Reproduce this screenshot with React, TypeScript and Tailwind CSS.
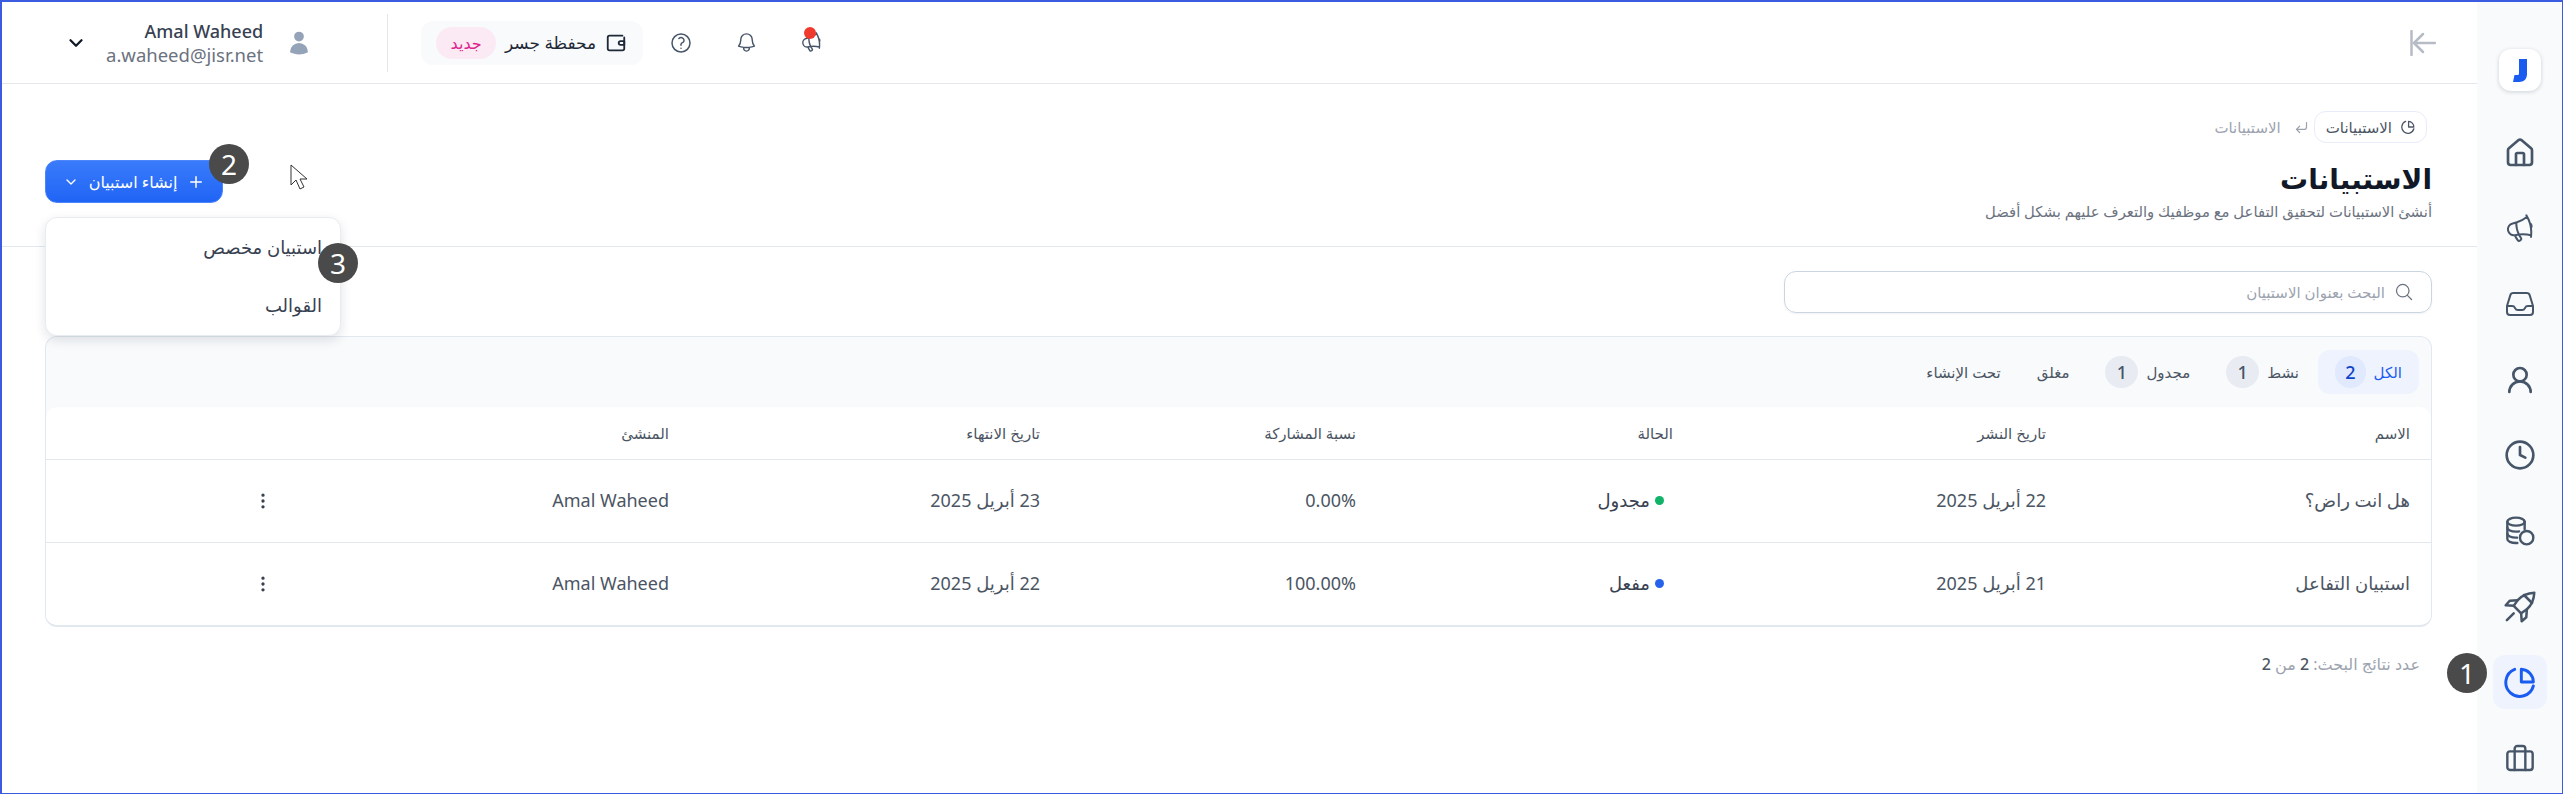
import { ChevronDown, Clock, CornerDownLeft, EllipsisVertical, House, Plus, UserRound } from 'lucide-react'
import {
  HiOutlineBell,
  HiOutlineInbox,
  HiOutlineMagnifyingGlass,
  HiOutlineMegaphone,
  HiOutlineQuestionMarkCircle,
  HiUser,
} from 'react-icons/hi2'

const FONT = "font-['Noto_Sans','DejaVu_Sans',sans-serif]"

function PieIcon({ className }: { className?: string }) {
  return (
    <svg viewBox="0 0 24 24" fill="none" stroke="currentColor" strokeWidth="2.200" strokeLinecap="round" strokeLinejoin="round" className={className}>
      <path d="M8 2.500a10.500 10.500 0 1 0 14 12.500" />
      <path d="M13 2.500a9.500 9.500 0 0 1 9 9.500h-9z" />
    </svg>
  )
}

function MegaIcon({ className }: { className?: string }) {
  return <HiOutlineMegaphone className={`-rotate-12 ${className}`} />
}

function RocketIcon({ className }: { className?: string }) {
  return (
    <svg viewBox="0 0 28 28" fill="none" stroke="currentColor" strokeWidth="2.200" strokeLinecap="round" strokeLinejoin="round" className={className}>
      <path d="M26.500 1.500c-6 .3-11 2.500-14.500 6.500L8.500 13l6.500 6.500 5-3.500c4-3.500 6.200-8.500 6.500-14.500z" />
      <path d="M12 8l-7 .5-3.500 4 7 .5" />
      <path d="M20 16l-.5 7-4 3.500-.5-7" />
      <path d="M2.500 25.500l6-6" />
      <path d="M17.500 3.500l7 7" />
    </svg>
  )
}

function DbCoinIcon({ className }: { className?: string }) {
  return (
    <svg viewBox="0 0 24 24" fill="none" stroke="currentColor" strokeWidth="1.800" strokeLinecap="round" strokeLinejoin="round" className={className}>
      <ellipse cx="9" cy="5" rx="6.500" ry="3" />
      <path d="M2.500 5v13c0 1.700 2.800 3 6.500 3h1" />
      <path d="M15.500 5v5.500" />
      <path d="M2.500 9.500c0 1.600 2.800 3 6.500 3 .8 0 1.600 0 2.300-.2" />
      <path d="M2.500 14c0 1.600 2.800 3 6.500 3h.8" />
      <circle cx="17" cy="17" r="5" />
    </svg>
  )
}

function CaseIcon({ className }: { className?: string }) {
  return (
    <svg viewBox="0 0 24 24" fill="none" stroke="currentColor" strokeWidth="1.800" strokeLinecap="round" strokeLinejoin="round" className={className}>
      <rect x="2.500" y="7" width="19" height="14" rx="2" />
      <path d="M8 21V5a2 2 0 0 1 2-2h4a2 2 0 0 1 2 2v16" />
    </svg>
  )
}

function WalletIcon({ className }: { className?: string }) {
  return (
    <svg viewBox="0 0 24 24" fill="none" stroke="currentColor" strokeWidth="2" strokeLinecap="round" strokeLinejoin="round" className={className}>
      <path d="M19 4H5a2 2 0 0 0-2 2v12a2 2 0 0 0 2 2h14a2 2 0 0 0 2-2V6" />
      <path d="M21 10h-4a2 2 0 0 0 0 4h4z" />
    </svg>
  )
}

function CollapseIcon({ className }: { className?: string }) {
  return (
    <svg viewBox="0 0 26 26" fill="none" stroke="currentColor" strokeWidth="2.500" strokeLinecap="round" strokeLinejoin="round" className={className}>
      <path d="M1.500 1v24" />
      <path d="M13 4l-9 9 9 9" />
      <path d="M4 13h21" />
    </svg>
  )
}

function Marker({ n, className }: { n: number; className: string }) {
  return (
    <span className={`absolute z-20 flex h-10 w-10 items-center justify-center rounded-full bg-[#4a4a4a] text-[28px] leading-none text-white ${className}`}>
      {n}
    </span>
  )
}

const NAV = [
  { Icon: House, key: 'home' },
  { Icon: MegaIcon, key: 'announce' },
  { Icon: HiOutlineInbox, key: 'inbox' },
  { Icon: UserRound, key: 'user' },
  { Icon: Clock, key: 'clock' },
  { Icon: DbCoinIcon, key: 'payroll' },
  { Icon: RocketIcon, key: 'rocket' },
  { Icon: PieIcon, key: 'surveys', active: true },
  { Icon: CaseIcon, key: 'jobs' },
]

const TABS = [
  { label: 'الكل', count: 2, active: true },
  { label: 'نشط', count: 1 },
  { label: 'مجدول', count: 1 },
  { label: 'مغلق' },
  { label: 'تحت الإنشاء' },
]

const ROWS = [
  { name: 'هل انت راض؟', publish: '22 أبريل 2025', status: 'مجدول', dot: 'bg-[#10b368]', rate: '0.00%', end: '23 أبريل 2025' },
  { name: 'استبيان التفاعل', publish: '21 أبريل 2025', status: 'مفعل', dot: 'bg-[#2563eb]', rate: '100.00%', end: '22 أبريل 2025' },
]

const COLS = 'grid grid-cols-[364px_373px_317px_316px_371px_396px_1fr] items-center pr-[21px]'

export default function App() {
  return (
    <div dir="rtl" className={`${FONT} relative flex h-[794px] border-t-2 border-r border-b border-l-2 border-[#3b5be0] bg-white text-[#374151]`}>
      {/* Sidebar */}
      <aside className="flex w-[85px] shrink-0 flex-col items-center bg-[#f8fafc] pt-[47px]">
        <div className="flex h-[42px] w-[42px] items-center justify-center rounded-xl bg-white shadow-[0_1px_4px_rgba(15,23,42,0.18)]">
          <svg viewBox="0 0 14 23" className="h-[23px] w-[14px]" fill="#1a5cf0">
            <path d="M6 0h8v15c0 5-3 8-8 8H0l1.500-7h3c1 0 1.500-.6 1.500-1.500z" />
          </svg>
        </div>
        <nav className="mt-[35px] flex flex-col items-center gap-[21.600px]">
          {NAV.map(({ Icon, key, active }) => (
            <div key={key} className={`flex h-[54px] w-[54px] items-center justify-center rounded-xl ${active ? 'bg-[#eef3fe] text-[#1a5cf0]' : 'text-[#475569]'}`}>
              <Icon className="h-[32px] w-[32px]" />
            </div>
          ))}
        </nav>
      </aside>

      <main className="relative flex min-w-0 flex-1 flex-col">
        {/* Top bar */}
        <header className="flex h-[82px] shrink-0 items-center justify-between border-b border-[#e5e7eb] pr-[41px] pl-[63px]">
          <CollapseIcon className="h-[26px] w-[26px] text-[#b6bcc6]" />
          <div className="flex items-center">
            <div className="relative flex h-6 w-6 items-center justify-center text-[#475569]">
              <MegaIcon className="h-[23px] w-[23px]" />
              <span className="absolute top-[-4px] right-[7px] h-3 w-3 rounded-full bg-[#ef3b2d]" />
            </div>
            <HiOutlineBell className="mr-[41px] h-[23px] w-[23px] text-[#475569]" />
            <HiOutlineQuestionMarkCircle className="mr-[42px] h-[24px] w-[24px] text-[#475569]" />
            <div className="mr-[26px] flex h-11 w-[222px] items-center rounded-xl bg-[#f8fafc] pr-[16px]">
              <WalletIcon className="h-[22px] w-[22px] text-[#1f2937]" />
              <span className="mr-[9px] text-[17px] text-[#1f2937]">محفظة جسر</span>
              <span className="mr-auto ml-[15px] flex h-8 w-[60px] items-center justify-center rounded-2xl bg-[#fbeaf4] text-[16px] text-[#db2590]">جديد</span>
            </div>
            <div className="mr-[33px] h-[58px] w-px bg-[#e5e7eb]" />
            <HiUser className="mr-[75px] ml-[23px] h-[26px] w-[26px] text-[#94a3b8]" />
            <div className="text-right" dir="ltr">
              <div className="text-[18px] leading-[23px] font-medium text-[#374151]">Amal Waheed</div>
              <div className="text-[18.500px] leading-[23px] text-[#6b7280]">a.waheed@jisr.net</div>
            </div>
            <ChevronDown className="mr-[19px] h-[22px] w-[22px] text-[#111827]" strokeWidth={2.500} />
          </div>
        </header>

        {/* Page heading */}
        <section className="flex h-[163px] shrink-0 justify-between border-b border-[#e2e8f0] pt-[27px] pr-[45px] pl-[43px]">
          <div>
            <div className="mr-[5px] -ml-[5px] flex items-center">
              <span className="flex h-8 items-center gap-[9px] rounded-xl border border-[#e8ebfa] px-[11px] text-[15px] text-[#4b5563]">
                <PieIcon className="h-[14px] w-[14px]" />
                الاستبيانات
              </span>
              <CornerDownLeft className="mr-[5px] ml-[13px] h-[15px] w-[15px] text-[#9ca3af]" />
              <span className="text-[15px] text-[#9ca3af]">الاستبيانات</span>
            </div>
            <h1 className="mt-[15px] text-[28px] leading-[40px] font-semibold text-[#111827]">الاستبيانات</h1>
            <p className="mt-[1px] text-[14.800px] leading-[24px] text-[#6b7280]">أنشئ الاستبيانات لتحقيق التفاعل مع موظفيك والتعرف عليهم بشكل أفضل</p>
          </div>
          <button className="mt-[49px] flex h-[43px] w-[178px] items-center justify-center gap-[10px] rounded-xl border border-[#4d85fb] bg-linear-to-b from-[#3a7bfb] to-[#1f64f5] text-[16px] font-medium text-white">
            <Plus className="h-[18px] w-[18px]" />
            إنشاء استبيان
            <ChevronDown className="h-4 w-4" />
          </button>
        </section>

        {/* Search + table */}
        <div className="flex-1 pt-[24px] pr-[45px] pl-[43px]">
          <label className="flex h-[42px] w-[648px] items-center gap-[9px] rounded-xl border border-[#cbd5e1] pr-[17px] shadow-[0_1px_2px_rgba(15,23,42,0.05)]">
            <HiOutlineMagnifyingGlass className="h-[20px] w-[20px] text-[#6b7280]" />
            <span className="text-[15px] text-[#9ca3af]">البحث بعنوان الاستبيان</span>
          </label>

          <div className="mt-[23px] overflow-hidden rounded-xl border border-b-2 border-[#e2e8f0] bg-[#f8fafc]">
            <div className="flex h-[70px] items-center gap-[2px] pr-[12px]">
              {TABS.map((tab) => (
                <div key={tab.label} className={`flex h-11 items-center gap-[8px] rounded-xl px-[17px] text-[15px] ${tab.active ? 'w-[101px] bg-[#eef3fe] text-[#1a5cf0]' : 'text-[#4b5563]'}`}>
                  {tab.label}
                  {tab.count && (
                    <span className={`flex h-8 w-[33px] items-center justify-center rounded-full text-[18px] font-medium ${tab.active ? 'bg-[#e0e9fd] text-[#0f46c8]' : 'bg-[#e8ecf2] text-[#475569]'}`}>
                      {tab.count}
                    </span>
                  )}
                </div>
              ))}
            </div>

            <div className="rounded-t-xl bg-white">
              <div className={`${COLS} h-[53px] border-b border-[#e2e8f0] text-[15px] font-medium text-[#4b5563]`}>
                <div>الاسم</div>
                <div>تاريخ النشر</div>
                <div>الحالة</div>
                <div>نسبة المشاركة</div>
                <div>تاريخ الانتهاء</div>
                <div>المنشئ</div>
                <div />
              </div>
              {ROWS.map((row, i) => (
                <div key={row.name} className={`${COLS} h-[82.500px] text-[18px] text-[#4b5563] ${i === 0 ? 'border-b border-[#e2e8f0]' : ''}`}>
                  <div>{row.name}</div>
                  <div>{row.publish}</div>
                  <div className="flex items-center gap-[5px] pr-[9px] font-medium text-[#374151]">
                    <span className={`h-[9px] w-[9px] rounded-full ${row.dot}`} />
                    {row.status}
                  </div>
                  <div>{row.rate}</div>
                  <div>{row.end}</div>
                  <div>Amal Waheed</div>
                  <div>
                    <EllipsisVertical className="h-5 w-5 text-[#374151]" />
                  </div>
                </div>
              ))}
            </div>
          </div>

          <p className="mt-[25px] pr-[12px] text-[16px] text-[#9ca3af]">
            عدد نتائج البحث: <span className="font-medium text-[#4b5563]">2</span> من <span className="font-medium text-[#4b5563]">2</span>
          </p>
        </div>

        {/* Open create menu */}
        <div className="absolute top-[215px] left-[43px] z-10 flex h-[119px] w-[296px] flex-col rounded-xl border border-[#e8ecf2] bg-white pr-[18px] text-[18px] text-[#374151] shadow-[0_4px_12px_rgba(15,23,42,0.12)]">
          <div className="flex h-[58px] items-center">استبيان مخصص</div>
          <div className="flex h-[59px] items-center">القوالب</div>
        </div>

        <Marker n={2} className="top-[142px] left-[207px]" />
        <Marker n={3} className="top-[241px] left-[316px]" />
        <Marker n={1} className="top-[651px] -right-[10px]" />

        {/* Mouse pointer captured in the screenshot */}
        <svg viewBox="0 0 18 27" className="absolute top-[162px] left-[288px] z-10 h-[27px] w-[18px]" fill="white" stroke="#333" strokeWidth="1">
          <path d="M1 1v20l5-5 4 9 4-2-4-8h7z" />
        </svg>
      </main>
    </div>
  )
}
